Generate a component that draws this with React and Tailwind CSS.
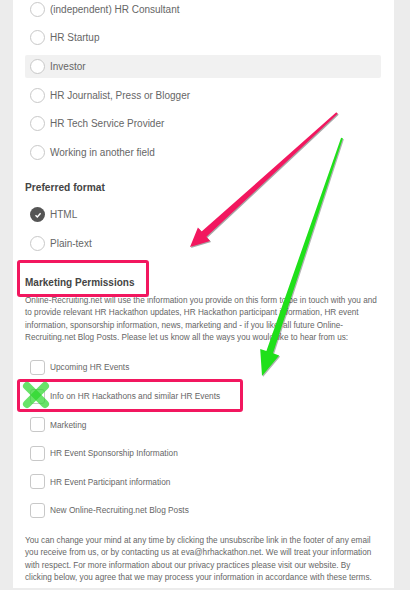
import React from "react";

const font = { fontFamily: '"Liberation Sans", Arial, sans-serif' };

const roles = [
  "(independent) HR Consultant",
  "HR Startup",
  "Investor",
  "HR Journalist, Press or Blogger",
  "HR Tech Service Provider",
  "Working in another field",
];

const perms = [
  "Upcoming HR Events",
  "Info on HR Hackathons and similar HR Events",
  "Marketing",
  "HR Event Sponsorship Information",
  "HR Event Participant information",
  "New Online-Recruiting.net Blog Posts",
];

const intro = [
  "Online-Recruiting.net will use the information you provide on this form to be in touch with you and",
  "to provide relevant HR Hackathon updates, HR Hackathon participant information, HR event",
  "information, sponsorship information, news, marketing and - if you like, all future Online-",
  "Recruiting.net Blog Posts. Please let us know all the ways you would like to hear from us:",
];

const outro = [
  "You can change your mind at any time by clicking the unsubscribe link in the footer of any email",
  "you receive from us, or by contacting us at eva@hrhackathon.net. We will treat your information",
  "with respect. For more information about our privacy practices please visit our website. By",
  "clicking below, you agree that we may process your information in accordance with these terms.",
];

function Radio({ checked }) {
  if (checked) {
    return (
      <span className="flex h-[15px] w-[15px] shrink-0 items-center justify-center rounded-full bg-[#555]">
        <svg width="8" height="8" viewBox="0 0 8 8">
          <path d="M1.5 4.2 L3.3 5.9 L6.6 2.2" fill="none" stroke="#fff" strokeWidth="1.4" />
        </svg>
      </span>
    );
  }
  return <span className="h-[15px] w-[15px] shrink-0 rounded-full border border-[#c8c8c8] bg-white" />;
}

function Row({ label, checked, highlight }) {
  return (
    <div className={"mb-[5.7px] flex h-[23px] items-center gap-[5px] rounded-[2px] pl-[5px] " + (highlight ? "bg-[#f1f1f1]" : "")}>
      <Radio checked={checked} />
      <span className="text-[10px] text-[#666]">{label}</span>
    </div>
  );
}

function Check({ label }) {
  return (
    <div className="mb-[5.6px] flex h-[23px] items-center gap-[5px] pl-[5px]">
      <span className="h-[15px] w-[15px] shrink-0 rounded-[3px] border border-[#c8c8c8] bg-white" />
      <span className="text-[8.3px] text-[#666]">{label}</span>
    </div>
  );
}

export default function App() {
  return (
    <div className="relative h-[590px] w-[410px] overflow-hidden bg-[#ececec]" style={font}>
      <div className="ml-[13px] mr-[16px] h-full bg-white pl-[12px] pr-[13px]">
        {/* Who are you */}
        <div className="-mt-[2.5px]">
          {roles.map((r) => (
            <Row key={r} label={r} highlight={r === "Investor"} />
          ))}
        </div>

        {/* format */}
        <div className="mt-[16px] text-[10.2px] font-bold text-[#444]">Preferred format</div>
        <div className="mt-[8px]">
          <Row label="HTML" checked />
          <Row label="Plain-text" />
        </div>

        {/* marketing */}
        <div className="mt-[20px] text-[10px] font-bold text-[#444]">Marketing Permissions</div>
        <div className="mt-[5px] text-[8.2px] leading-[12.3px] text-[#666]">
          {intro.map((l) => (
            <div key={l} className="whitespace-nowrap">{l}</div>
          ))}
        </div>
        <div className="mt-[12px]">
          {perms.map((p) => (
            <Check key={p} label={p} />
          ))}
        </div>
        <div className="mt-[13px] text-[8.2px] leading-[12.3px] text-[#666]">
          {outro.map((l) => (
            <div key={l} className="whitespace-nowrap">{l}</div>
          ))}
        </div>
      </div>

      {/* annotation boxes */}
      <div className="absolute left-[17px] top-[260px] h-[37px] w-[132px] rounded-[3px] border-[3px] border-[#f2175f]" />
      <div className="absolute left-[17px] top-[379px] h-[33px] w-[226px] rounded-[3px] border-[3px] border-[#f2175f]" />

      {/* annotation arrows + green cross */}
      <svg className="pointer-events-none absolute left-0 top-0" width="410" height="590" viewBox="0 0 410 590">
        <polygon
          points="337.7,113.7 206.4,236.8 210.1,240.9 190,247 197.9,227.6 201.6,231.6 336.3,112.3"
          fill="#f2175f"
          style={{ filter: "drop-shadow(1px 1px 0.6px rgba(0,0,0,0.35))" }}
        />
        <polygon
          points="342.9,138.3 273,353.3 279.2,355.4 262,376 260.2,349 266.4,351.1 341.1,137.7"
          fill="#1fe01a"
          style={{ filter: "drop-shadow(1px 1px 0.6px rgba(0,0,0,0.3))" }}
        />
        <g stroke="rgba(40,215,40,0.7)" strokeWidth="8" strokeLinecap="round">
          <line x1="27" y1="386" x2="45" y2="404" />
          <line x1="45" y1="386" x2="27" y2="404" />
        </g>
      </svg>
    </div>
  );
}
